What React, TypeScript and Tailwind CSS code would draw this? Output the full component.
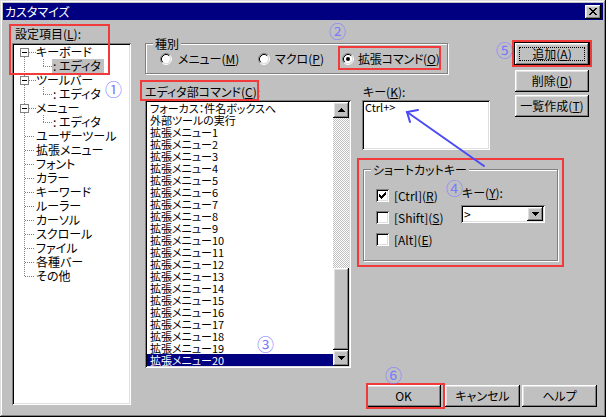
import React from 'react';

const raised =
  'shadow-[inset_-1px_-1px_0_#000,inset_1px_1px_0_#fff,inset_-2px_-2px_0_#808080,inset_2px_2px_0_#dfdfdf]';
const sunken =
  'shadow-[inset_1px_1px_0_#808080,inset_-1px_-1px_0_#fff,inset_2px_2px_0_#000,inset_-2px_-2px_0_#dfdfdf]';

const Mn: React.FC<{ c: string }> = ({ c }) => (
  <span className="underline underline-offset-[1px]">{c}</span>
);

const TriDown = () => (
  <svg width="7" height="4" shapeRendering="crispEdges">
    <path d="M0 0h7v1h-1v1h-1v1h-1v1h-1v-1h-1v-1h-1v-1h-1z" fill="#000" />
  </svg>
);

const TriUp = () => (
  <svg width="7" height="4" shapeRendering="crispEdges">
    <path d="M3 0h1v1h1v1h1v1h1v1h-7v-1h1v-1h1v-1h1z" fill="#000" />
  </svg>
);

const Radio: React.FC<{ checked?: boolean }> = ({ checked }) => (
  <svg width="12" height="12">
    <circle cx="6" cy="6" r="4.5" fill="#fff" />
    <path d="M2.11 9.89A5.5 5.5 0 0 1 9.89 2.11" stroke="#808080" fill="none" />
    <path d="M9.89 2.11A5.5 5.5 0 0 1 2.11 9.89" stroke="#fff" fill="none" />
    <path d="M2.82 9.18A4.5 4.5 0 0 1 9.18 2.82" stroke="#000" fill="none" />
    <path d="M9.18 2.82A4.5 4.5 0 0 1 2.82 9.18" stroke="#dfdfdf" fill="none" />
    {checked && <circle cx="6" cy="6" r="2" fill="#000" />}
  </svg>
);

const Check: React.FC<{ checked?: boolean }> = ({ checked }) => (
  <div className={`h-[13px] w-[13px] bg-white ${sunken} flex items-center justify-center`}>
    {checked && (
      <svg width="7" height="7" shapeRendering="crispEdges">
        <path d="M0 2h1v1h1v1h1v-1h1v-1h1v-1h1v-1h1v3h-1v1h-1v1h-1v1h-1v1h-1v-1h-1v-1h-1v-1h-1z" fill="#000" />
      </svg>
    )}
  </div>
);

type TreeRow = { label: string; kind: 'parent' | 'child' | 'leaf'; selected?: boolean; first?: boolean; last?: boolean };

const treeRows: TreeRow[] = [
  { label: 'キーボード', kind: 'parent', first: true },
  { label: 'エディタ', kind: 'child', selected: true },
  { label: 'ツールバー', kind: 'parent' },
  { label: 'エディタ', kind: 'child' },
  { label: 'メニュー', kind: 'parent' },
  { label: 'エディタ', kind: 'child' },
  { label: 'ユーザーツール', kind: 'leaf' },
  { label: '拡張メニュー', kind: 'leaf' },
  { label: 'フォント', kind: 'leaf' },
  { label: 'カラー', kind: 'leaf' },
  { label: 'キーワード', kind: 'leaf' },
  { label: 'ルーラー', kind: 'leaf' },
  { label: 'カーソル', kind: 'leaf' },
  { label: 'スクロール', kind: 'leaf' },
  { label: 'ファイル', kind: 'leaf' },
  { label: '各種バー', kind: 'leaf' },
  { label: 'その他', kind: 'leaf', last: true },
];

const dot = { stroke: '#808080', strokeDasharray: '1 1', shapeRendering: 'crispEdges' as const };

const TreeLine: React.FC<{ row: TreeRow }> = ({ row }) => {
  if (row.kind === 'child') {
    return (
      <svg width="38" height="14" className="shrink-0">
        <line x1="10.5" y1="0" x2="10.5" y2="14" {...dot} />
        <line x1="29.5" y1="0" x2="29.5" y2="8" {...dot} />
        <line x1="29" y1="7.5" x2="38" y2="7.5" {...dot} />
      </svg>
    );
  }
  if (row.kind === 'parent') {
    return (
      <svg width="22" height="14" className="shrink-0">
        {!row.first && <line x1="10.5" y1="0" x2="10.5" y2="3" {...dot} />}
        <line x1="10.5" y1="12" x2="10.5" y2="14" {...dot} />
        <line x1="15" y1="7.5" x2="22" y2="7.5" {...dot} />
        <rect x="6.5" y="3.5" width="8" height="8" fill="#fff" stroke="#808080" shapeRendering="crispEdges" />
        <line x1="8" y1="7.5" x2="13" y2="7.5" stroke="#000" shapeRendering="crispEdges" />
      </svg>
    );
  }
  return (
    <svg width="22" height="14" className="shrink-0">
      <line x1="10.5" y1="0" x2="10.5" y2={row.last ? 8 : 14} {...dot} />
      <line x1="11" y1="7.5" x2="21" y2="7.5" {...dot} />
    </svg>
  );
};

const listItems = [
  'フォーカス：件名ボックスへ',
  '外部ツールの実行',
  ...Array.from({ length: 20 }, (_, i) => `拡張メニュー${i + 1}`),
];

const Button: React.FC<{ className?: string; children: React.ReactNode }> = ({ className, children }) => (
  <div className={`flex items-center justify-center leading-[14px] ${raised} ${className ?? ''}`}>{children}</div>
);

export default function App() {
  return (
    <div className="relative flex h-[417px] w-[606px] flex-col overflow-hidden bg-[#c0c0c0] p-[3px] font-['Noto_Sans_CJK_JP',sans-serif] text-[12px] text-black [font-feature-settings:'palt'] shadow-[inset_-1px_-1px_0_#000,inset_1px_1px_0_#dfdfdf,inset_-2px_-2px_0_#808080,inset_2px_2px_0_#fff]">
      {/* title bar */}
      <div className="flex h-[17px] shrink-0 items-center justify-between bg-[#000080] px-[2px]">
        <span className="leading-[17px] text-white">カスタマイズ</span>
        <div className={`flex h-[14px] w-[16px] items-center justify-center bg-[#c0c0c0] ${raised}`}>
          <svg width="8" height="7" shapeRendering="crispEdges">
            <path
              d="M0 0h2v1h1v1h2v-1h1v-1h2v1h-1v1h-1v1h-1v1h1v1h1v1h1v1h-2v-1h-1v-1h-2v1h-1v1h-2v-1h1v-1h1v-1h1v-1h-1v-1h-1v-1h-1z"
              fill="#000"
            />
          </svg>
        </div>
      </div>

      <div className="flex flex-1">
        {/* tree column */}
        <div className="ml-[9px] flex flex-col">
          <div className="mt-[7px] h-[14px] pl-[3px] leading-[14px]">
            設定項目(<Mn c="L" />):
          </div>
          <div className={`mt-[2px] h-[362px] w-[119px] bg-white p-[2px] ${sunken}`}>
            {treeRows.map((row, i) => (
              <div key={i} className="flex h-[14px] items-center">
                <TreeLine row={row} />
                {row.kind === 'child' ? (
                  <span className={`h-[14px] pl-[1px] pr-[3px] leading-[14px] ${row.selected ? 'bg-[#c0c0c0]' : ''}`}>
                    :&nbsp;{row.label}
                  </span>
                ) : (
                  <span className="h-[14px] leading-[14px]">{row.label}</span>
                )}
              </div>
            ))}
          </div>
        </div>

        {/* right part */}
        <div className="ml-[14px] flex w-[455px] flex-col">
          <div className="flex">
            <div className="flex w-[346px] flex-col">
              {/* 種別 */}
              <div className="mt-[23px] h-[31px] w-[303px] border border-[#808080] shadow-[inset_1px_1px_0_#fff,1px_1px_0_#fff]">
                <div className="-mt-[7px] ml-[7px] h-[14px] w-fit bg-[#c0c0c0] px-[2px] leading-[14px]">種別</div>
                <div className="mt-[1px] flex h-[14px] items-center pl-[14px]">
                  <div className="flex w-[98px] items-center gap-[6px]">
                    <Radio />
                    <span className="leading-[14px]">
                      メニュー(<Mn c="M" />)
                    </span>
                  </div>
                  <div className="flex w-[84px] items-center gap-[5px]">
                    <Radio />
                    <span className="leading-[14px]">
                      マクロ(<Mn c="P" />)
                    </span>
                  </div>
                  <div className="flex items-center gap-[4px]">
                    <Radio checked />
                    <span className="leading-[14px] tracking-[-0.2px]">
                      拡張コマンド(<Mn c="O" />)
                    </span>
                  </div>
                </div>
              </div>

              <div className="flex">
                {/* command list */}
                <div className="flex w-[206px] flex-col">
                  <div className="mt-[11px] h-[15px] leading-[14px]">
                    エディタ部コマンド(<Mn c="C" />):
                  </div>
                  <div className={`flex h-[268px] w-[206px] bg-white p-[2px] ${sunken}`}>
                    <div className="flex-1 overflow-hidden">
                      {listItems.map((t, i) => (
                        <div
                          key={i}
                          className={`h-[12px] whitespace-nowrap pl-[3px] text-[11px] leading-[12px] ${
                            i === listItems.length - 1 ? 'bg-[#000080] text-white' : ''
                          }`}
                        >
                          {t}
                        </div>
                      ))}
                    </div>
                    <div className="flex w-[16px] flex-col">
                      <div className={`flex h-[16px] items-center justify-center bg-[#c0c0c0] ${raised}`}>
                        <TriUp />
                      </div>
                      <div className="h-[150px] bg-[repeating-conic-gradient(#c0c0c0_0_25%,#ffffff_0_50%)] bg-[length:2px_2px]" />
                      <div className={`h-[82px] bg-[#c0c0c0] ${raised}`} />
                      <div className={`flex h-[16px] items-center justify-center bg-[#c0c0c0] ${raised}`}>
                        <TriDown />
                      </div>
                    </div>
                  </div>
                </div>

                {/* key column */}
                <div className="ml-[11px] flex flex-col">
                  <div className="mt-[11px] h-[15px] pl-[1px] leading-[14px]">
                    キー(<Mn c="K" />):
                  </div>
                  <div className={`h-[50px] w-[128px] bg-white px-[3px] pt-[1px] text-[11px] leading-[12px] ${sunken}`}>Ctrl+&gt;</div>

                  <div className="ml-[1px] mt-[19px] h-[92px] w-[195px] border border-[#808080] shadow-[inset_1px_1px_0_#fff,1px_1px_0_#fff]">
                    <div className="-mt-[7px] ml-[7px] h-[14px] w-fit bg-[#c0c0c0] px-[2px] leading-[14px]">
                      ショートカットキー
                    </div>
                    <div className="flex">
                      <div className="ml-[12px] mt-[12px] flex w-[85px] flex-col gap-[9px]">
                        <div className="flex h-[13px] items-center gap-[5px]">
                          <Check checked />
                          <span className="leading-[13px]">
                            [Ctrl](<Mn c="R" />)
                          </span>
                        </div>
                        <div className="flex h-[13px] items-center gap-[5px]">
                          <Check />
                          <span className="leading-[13px]">
                            [Shift](<Mn c="S" />)
                          </span>
                        </div>
                        <div className="flex h-[13px] items-center gap-[5px]">
                          <Check />
                          <span className="leading-[13px]">
                            [Alt](<Mn c="E" />)
                          </span>
                        </div>
                      </div>
                      <div className="mt-[9px] flex flex-col">
                        <div className="h-[14px] pl-[1px] leading-[14px]">
                          キー(<Mn c="Y" />):
                        </div>
                        <div className={`mt-[5px] flex h-[18px] w-[84px] bg-white p-[2px] ${sunken}`}>
                          <span className="flex-1 pl-[1px] leading-[14px]">&gt;</span>
                          <div className={`flex w-[16px] items-center justify-center bg-[#c0c0c0] ${raised}`}>
                            <TriDown />
                          </div>
                        </div>
                      </div>
                    </div>
                  </div>
                </div>
              </div>
            </div>

            {/* side buttons */}
            <div className="ml-[23px] mt-[22px] flex flex-col">
              <div className="h-[24px] w-[76px] border border-black">
                <Button className="h-full w-full bg-[#c0c0c0] p-[4px]">
                  <span className="flex h-full w-full items-center justify-center border border-dotted border-black">
                    追加(<Mn c="A" />)
                  </span>
                </Button>
              </div>
              <Button className="ml-[1px] mt-[4px] h-[22px] w-[74px]">
                削除(<Mn c="D" />)
              </Button>
              <Button className="ml-[1px] mt-[3px] h-[22px] w-[74px]">
                一覧作成(<Mn c="T" />)
              </Button>
            </div>
          </div>

          {/* bottom buttons */}
          <div className="mt-[17px] flex justify-end pr-[3px]">
            <Button className="h-[22px] w-[75px]">OK</Button>
            <Button className="ml-[4px] h-[22px] w-[75px]">キャンセル</Button>
            <Button className="ml-[2px] h-[22px] w-[75px]">ヘルプ</Button>
          </div>
        </div>
      </div>

      {/* annotations */}
      <div className="pointer-events-none absolute left-[9px] top-[24px] h-[51px] w-[101px] border-2 border-[#f23a3a]" />
      <div className="pointer-events-none absolute left-[338px] top-[46px] h-[24px] w-[103px] border-2 border-[#f23a3a]" />
      <div className="pointer-events-none absolute left-[140px] top-[80px] h-[21px] w-[119px] border-2 border-[#f23a3a]" />
      <div className="pointer-events-none absolute left-[357px] top-[158px] h-[109px] w-[207px] border-2 border-[#f23a3a]" />
      <div className="pointer-events-none absolute left-[512px] top-[40px] h-[27px] w-[80px] border-2 border-[#f23a3a]" />
      <div className="pointer-events-none absolute left-[366px] top-[383px] h-[26px] w-[79px] border-2 border-[#f23a3a]" />

      <span className="absolute left-[105px] top-[80px] text-[17px] leading-none text-[#7b7bff]">①</span>
      <span className="absolute left-[329px] top-[22px] text-[17px] leading-none text-[#7b7bff]">②</span>
      <span className="absolute left-[257px] top-[335px] text-[17px] leading-none text-[#7b7bff]">③</span>
      <span className="absolute left-[446px] top-[179px] text-[17px] leading-none text-[#7b7bff]">④</span>
      <span className="absolute left-[496px] top-[41px] text-[17px] leading-none text-[#7b7bff]">⑤</span>
      <span className="absolute left-[385px] top-[366px] text-[17px] leading-none text-[#7b7bff]">⑥</span>

      <svg className="pointer-events-none absolute left-[400px] top-[105px]" width="90" height="65">
        <g stroke="#4b4bf5" strokeWidth="2" strokeLinecap="round" fill="none">
          <line x1="7" y1="7" x2="84" y2="61" />
          <polyline points="18,5 7,7 10,17" />
        </g>
      </svg>
    </div>
  );
}
